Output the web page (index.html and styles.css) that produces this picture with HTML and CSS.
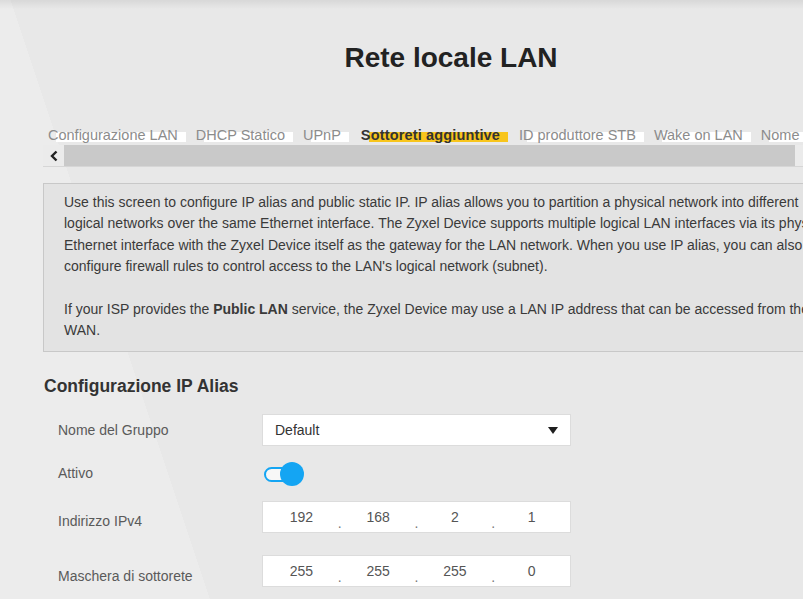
FILE: index.html
```html
<!DOCTYPE html>
<html lang="it">
<head>
<meta charset="utf-8">
<title>Rete locale LAN</title>
<link rel="stylesheet" href="styles.css">
</head>
<body>
<div class="page">
  <h1 class="title">Rete locale LAN</h1>

  <nav class="tabs">
    <span class="tab">Configurazione LAN</span>
    <span class="tab">DHCP Statico</span>
    <span class="tab">UPnP</span>
    <span class="tab tab-active">Sottoreti aggiuntive</span>
    <span class="tab">ID produttore STB</span>
    <span class="tab">Wake on LAN</span>
    <span class="tab">Nome</span>
  </nav>

  <div class="hscroll">
    <span class="hscroll-btn">
      <svg width="10" height="12" viewBox="0 0 10 12"><path d="M7.5 1.5 L3 6 L7.5 10.5" fill="none" stroke="#222" stroke-width="2.4"/></svg>
    </span>
    <span class="hscroll-track"></span>
    <span class="hscroll-btn hscroll-btn-right"></span>
  </div>

  <div class="info">
    <p>Use this screen to configure IP alias and public static IP. IP alias allows you to partition a physical network into different logical networks over the same Ethernet interface. The Zyxel Device supports multiple logical LAN interfaces via its physical Ethernet interface with the Zyxel Device itself as the gateway for the LAN network. When you use IP alias, you can also configure firewall rules to control access to the LAN's logical network (subnet).</p>
    <p>If your ISP provides the <b>Public LAN</b> service, the Zyxel Device may use a LAN IP address that can be accessed from the WAN.</p>
  </div>

  <h2 class="section-title">Configurazione IP Alias</h2>

  <div class="form">
    <div class="row row-group">
      <label class="label label-group">Nome del Gruppo</label>
      <div class="select">
        <span>Default</span>
        <span class="caret"></span>
      </div>
    </div>

    <div class="row row-active">
      <label class="label label-active">Attivo</label>
      <div class="toggle">
        <span class="toggle-track"></span>
        <span class="toggle-knob"></span>
      </div>
    </div>

    <div class="row row-ip">
      <label class="label label-ip">Indirizzo IPv4</label>
      <div class="ip">
        <span class="seg">192</span><span class="dot">.</span>
        <span class="seg">168</span><span class="dot">.</span>
        <span class="seg">2</span><span class="dot">.</span>
        <span class="seg">1</span>
      </div>
    </div>

    <div class="row row-mask">
      <label class="label label-mask">Maschera di sottorete</label>
      <div class="ip">
        <span class="seg">255</span><span class="dot">.</span>
        <span class="seg">255</span><span class="dot">.</span>
        <span class="seg">255</span><span class="dot">.</span>
        <span class="seg">0</span>
      </div>
    </div>
  </div>
</div>
</body>
</html>
```

FILE: styles.css
```css
html, body {
  margin: 0;
  padding: 0;
  overflow: hidden;
}

body {
  width: 803px;
  height: 599px;
  font-family: "Liberation Sans", Arial, sans-serif;
  color: #333;
  background:
    linear-gradient(to bottom, rgba(0,0,0,0.07) 0, rgba(0,0,0,0) 9px),
    linear-gradient(71.6deg, #ececec 199px, #e8e8e8 199px);
}

.page {
  margin-left: 43px;
  width: 816px;
}

.title {
  margin: 0;
  padding-top: 42px;
  font-size: 28px;
  line-height: 32px;
  font-weight: bold;
  color: #222;
  text-align: center;
}

.tabs {
  position: relative;
  z-index: 0;
  margin-top: 51px;
  padding-left: 5px;
  white-space: nowrap;
  font-size: 14.5px;
  line-height: 20px;
  display: flex;
}

.tab {
  position: relative;
  color: #8c8c8c;
  margin-right: 18px;
  flex: none;
}

.tab::before {
  content: "";
  position: absolute;
  z-index: -1;
  left: 8px;
  right: -8px;
  top: 7px;
  height: 10px;
  background: #ffffff;
}

.tab-active {
  color: #333;
  font-weight: bold;
  letter-spacing: 0.15px;
  margin-left: 2px;
  margin-right: 19px;
}

.tab-active::before {
  background: #f8c51c;
}

.hscroll {
  display: flex;
  width: 773px;
  height: 21px;
  border-bottom: 1px solid #d6d6d6;
}

.hscroll-btn {
  width: 21px;
  flex: none;
  display: flex;
  align-items: center;
  justify-content: center;
  background: #ebebeb;
}

.hscroll-btn-right {
  width: 21px;
}

.hscroll-track {
  flex: 1;
  background: #c9c9c9;
}

.info {
  margin-top: 16px;
  box-sizing: border-box;
  width: 816px;
  padding: 8px 20px 10px 20px;
  background: #e3e3e3;
  border: 1px solid #c8c8c8;
  font-size: 14px;
  line-height: 21.33px;
  color: #3a3a3a;
}

.info p {
  margin: 0;
}

.info p + p {
  margin-top: 21.33px;
}

.section-title {
  margin: 22px 0 0 1px;
  font-size: 17.5px;
  line-height: 24px;
  font-weight: bold;
  color: #333;
}

.form {
  display: flex;
  flex-direction: column;
}

.row {
  display: flex;
  align-items: flex-start;
}

.row-group { margin-top: 16px; }
.row-active { margin-top: 16px; }
.row-ip { margin-top: 15px; }
.row-mask { margin-top: 22px; }

.label {
  width: 204px;
  margin-left: 15px;
  font-size: 14px;
  line-height: 20px;
  color: #5a5a5a;
}

.label-group { padding-top: 6px; }
.label-active { padding-top: 1px; }
.label-ip { padding-top: 10px; }
.label-mask { padding-top: 11px; }

.select {
  box-sizing: border-box;
  width: 309px;
  height: 32px;
  padding: 0 12px 0 12px;
  display: flex;
  align-items: center;
  justify-content: space-between;
  background: #fff;
  border: 1px solid #dcdcdc;
  font-size: 14px;
  color: #333;
}

.caret {
  width: 0;
  height: 0;
  border-left: 5px solid transparent;
  border-right: 5px solid transparent;
  border-top: 7px solid #1e1e1e;
}

.toggle {
  display: flex;
  align-items: center;
  margin-left: 2px;
  height: 24px;
}

.toggle-track {
  box-sizing: border-box;
  width: 30px;
  height: 15px;
  border: 2px solid #14a5f3;
  border-radius: 8px;
  background: #f7f7f7;
}

.toggle-knob {
  width: 24px;
  height: 24px;
  margin-left: -14px;
  border-radius: 50%;
  background: #14a5f3;
}

.ip {
  box-sizing: border-box;
  width: 309px;
  height: 32px;
  display: flex;
  align-items: stretch;
  background: #fff;
  border: 1px solid #dcdcdc;
  font-size: 14px;
  color: #555;
}

.seg {
  flex: 1;
  text-align: center;
  line-height: 30px;
}

.dot {
  box-sizing: border-box;
  width: 4px;
  margin: 0 -2px;
  padding-top: 14px;
  text-align: center;
  line-height: 14px;
  color: #777;
}
```
